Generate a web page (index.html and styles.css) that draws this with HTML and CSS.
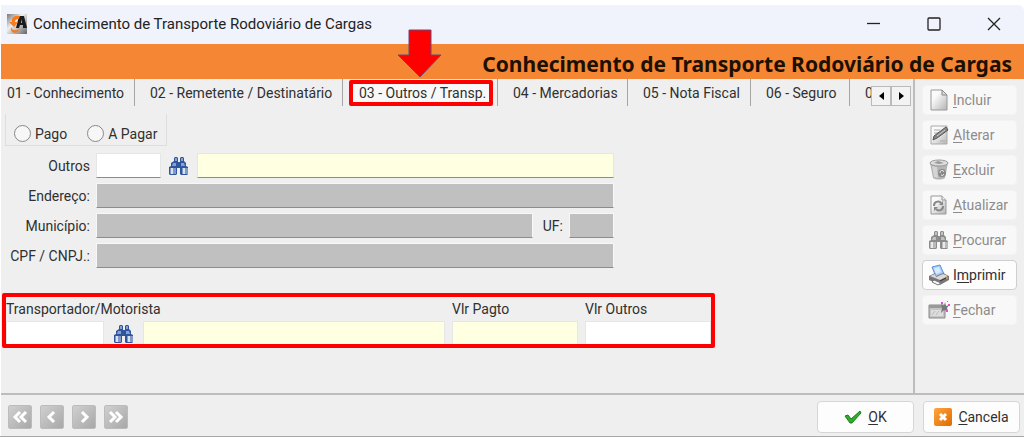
FILE: index.html
```html
<!DOCTYPE html>
<html lang="pt-BR">
  <head>
    <meta charset="utf-8" />
    <title>Conhecimento de Transporte Rodoviário de Cargas</title>
    <link rel="stylesheet" href="styles.css">
  </head>

  <body>
    <!-- Shared icons -->
    <svg class="defs" width="0" height="0">
      <defs>
        <linearGradient id="page" x1="0" y1="0" x2="1" y2="1">
          <stop offset="0.3" stop-color="#fafafa" />
          <stop offset="1" stop-color="#b4b4b4" />
        </linearGradient>
        <linearGradient id="orange" x1="0" y1="0" x2="1" y2="1">
          <stop offset="0" stop-color="#ffa640" />
          <stop offset="1" stop-color="#e06a00" />
        </linearGradient>
        <linearGradient id="metal" x1="0" y1="0" x2="1" y2="1">
          <stop offset="0" stop-color="#777" />
          <stop offset="0.4" stop-color="#eee" />
          <stop offset="1" stop-color="#666" />
        </linearGradient>
        <symbol id="binoculars" viewBox="0 0 20 18">
          <path d="M5 1l1-1h2l1 1v4h2V1l1-1h2l1 1v3l2 2v3l2 1v7l-1 1h-6l-1-1v-6H8v6l-1 1H1l-1-1v-7l2-1V6l3-2z" fill="currentColor" />
          <path d="M6 1h2v3H6zM12 1h2v3h-2zM4 6h3v3H3zM12 6h3l1 3h-4z" fill="#fff" opacity="0.45" />
          <path d="M1 11h6v6H1zM13 11h6v6h-6z" fill="#fff" opacity="0.4" />
          <path d="M2 11h2v6H2zM14 11h2v6h-2z" fill="#fff" opacity="0.7" />
        </symbol>
      </defs>
    </svg>

    <div class="window">
      <header class="titlebar">
        <svg class="app-icon" width="20" height="20" viewBox="0 0 20 20">
          <rect width="20" height="20" fill="url(#metal)" />
          <path d="M9 14l3-12h5l3 12h-4v-3h-3l-1 3zM14 9h1l-1-4z" fill="#1c1c1c" fill-rule="evenodd" />
          <path d="M13 2C7 1 4 4 5 8L2 8l5 5 4-5H8c0-2 1-3 4-3z" fill="#f57c1f" />
          <path d="M4 13c1 4 5 4 8 2l-1 3c-4 2-8 0-7-5z" fill="#f57c1f" />
        </svg>
        <span class="caption">Conhecimento de Transporte Rodoviário de Cargas</span>
        <div class="window-buttons">
          <button aria-label="Minimizar"><svg width="14" height="14"><path d="M0 6.5h13" /></svg></button>
          <button aria-label="Maximizar"><svg width="14" height="14"><rect x="1" y="1" width="12" height="12" rx="1" /></svg></button>
          <button aria-label="Sair"><svg width="14" height="14"><path d="M1 1l12 12M13 1L1 13" /></svg></button>
        </div>
      </header>

      <h1 class="banner">Conhecimento de Transporte Rodoviário de Cargas</h1>

      <div class="main">
        <main class="content">
          <!-- Tabs -->
          <div class="tab-bar">
            <nav class="tabs">
              <button class="tab">01 - Conhecimento</button>
              <button class="tab">02 - Remetente / Destinatário</button>
              <div class="tab-marked">
                <button class="tab active">03 - Outros / Transp.</button>
                <svg class="arrow" width="46" height="50" viewBox="0 0 46 50">
                  <path d="M12 1h22v25h10L23 48 1 26h11z" fill="#fe0000" stroke="#6b4a78" />
                </svg>
              </div>
              <button class="tab">04 - Mercadorias</button>
              <button class="tab">05 - Nota Fiscal</button>
              <button class="tab">06 - Seguro</button>
              <button class="tab cut">0</button>
            </nav>
            <div class="tab-scroll">
              <button aria-label="Anterior"><svg width="5" height="8"><path d="M5 0v8L0 4z" /></svg></button>
              <button aria-label="Próxima"><svg width="5" height="8"><path d="M0 0v8l5-4z" /></svg></button>
            </div>
          </div>

          <div class="payment">
            <label><input type="radio" name="payment" />Pago</label>
            <label><input type="radio" name="payment" />A Pagar</label>
          </div>

          <!-- Outros -->
          <div class="fields">
            <div class="row">
              <label for="outros">Outros</label>
              <input class="code" type="text" id="outros" />
              <button class="search" aria-label="Procurar outros"><svg width="20" height="18"><use href="#binoculars" /></svg></button>
              <input class="name lookup" type="text" aria-label="Nome" readonly />
            </div>
            <div class="row">
              <label for="endereco">Endereço:</label>
              <input class="name locked" type="text" id="endereco" readonly />
            </div>
            <div class="row">
              <label for="municipio">Município:</label>
              <input class="name locked" type="text" id="municipio" readonly />
              <label class="uf-label" for="uf">UF:</label>
              <input class="uf locked" type="text" id="uf" readonly />
            </div>
            <div class="row">
              <label for="cpf">CPF / CNPJ.:</label>
              <input class="name locked" type="text" id="cpf" readonly />
            </div>
          </div>

          <!-- Transportador -->
          <div class="carrier">
            <label class="carrier-label" for="transportador">Transportador/Motorista</label>
            <label class="value" for="pagto">Vlr Pagto</label>
            <label class="value" for="vlroutros">Vlr Outros</label>
            <input type="text" id="transportador" />
            <button class="search" aria-label="Procurar motorista"><svg width="20" height="18"><use href="#binoculars" /></svg></button>
            <input class="lookup" type="text" aria-label="Nome do motorista" readonly />
            <input class="lookup value" type="text" id="pagto" readonly />
            <input class="value" type="text" id="vlroutros" />
          </div>
        </main>

        <!-- Actions -->
        <aside class="actions">
          <button disabled>
            <svg width="20" height="22" viewBox="0 0 20 22"><path d="M2 1h11l5 5v15H2z" fill="url(#page)" stroke="#999" /><path d="M13 1v5h5z" fill="#ddd" stroke="#888" /></svg>
            <span><u>I</u>ncluir</span>
          </button>
          <button disabled>
            <svg width="20" height="22" viewBox="0 0 20 22"><path d="M2 2h16v18H2z" fill="url(#page)" stroke="#aaa" /><path d="M5 6h6M5 9h5M5 12h4M11 17h5" stroke="#aaa" /><path d="M4 16l1-4L17 3l2 3-11 8z" fill="#888" stroke="#555" /><path d="M8 12l8-6" stroke="#ccc" /></svg>
            <span><u>A</u>lterar</span>
          </button>
          <button disabled>
            <svg width="20" height="22" viewBox="0 0 20 22"><path d="M1 4l3 15c3 2 9 2 12 0l3-15z" fill="#b4b4b4" /><path d="M3 7l2 11 4 1-1-11z" fill="#d4d4d4" /><ellipse cx="10" cy="4" rx="9" ry="3" fill="#ddd" stroke="#999" /><path d="M5 4l4-2 6 2-5 1z" fill="#999" /><circle cx="13" cy="14" r="4" fill="#888" /><path d="M11 14a2 2 0 0 1 4-1M15 15a2 2 0 0 1-3 1" stroke="#eee" fill="none" /></svg>
            <span><u>E</u>xcluir</span>
          </button>
          <button disabled>
            <svg width="20" height="22" viewBox="0 0 20 22"><path d="M2 2h11l4 4v14H2z" fill="url(#page)" stroke="#999" /><path d="M13 2v4h4" fill="#eee" stroke="#999" /><path d="M5 12a4 4 0 0 1 7-3M14 12a4 4 0 0 1-7 3" fill="none" stroke="#888" stroke-width="2" /><path d="M14 7v4h-4zM5 17v-4h4z" fill="#888" /></svg>
            <span><u>A</u>tualizar</span>
          </button>
          <button disabled>
            <svg width="20" height="18"><use href="#binoculars" /></svg>
            <span><u>P</u>rocurar</span>
          </button>
          <button>
            <svg width="22" height="22" viewBox="0 0 22 22"><path d="M4 3l8-2 4 9-8 3z" fill="#a9cdfa" stroke="#5f8fd8" /><path d="M6 4l5-1 2 5-5 2z" fill="#d8eaff" /><path d="M1 12l6-3 1 3 7-3 6 3v4l-9 5-11-5z" fill="#777" /><path d="M2 12l5-2 1 3 7-3 5 2-8 4z" fill="#d9d9d9" /><path d="M6 16l7 3-3 2-6-3z" fill="#f8f8f8" stroke="#777" /><path d="M12 17l8-4" stroke="#333" /><circle cx="19" cy="14" r="1" fill="#e9a137" /></svg>
            <span>I<u>m</u>primir</span>
          </button>
          <button disabled>
            <svg width="22" height="20" viewBox="0 0 22 20"><path d="M1 5h16v13H1z" fill="#c4c4c4" stroke="#888" /><path d="M1 5h16v3H1z" fill="#999" /><path d="M3 10h12v6H3z" fill="#ddd" /><path d="M4 15l3-4M8 15l3-4" stroke="#bbb" /><path d="M13 4l3 2 1-4 1 4 3-1-2 3 1 3-4-1-3 3 1-5z" fill="#777" /><path d="M13 2h2v2h-2zM20 4h2v2h-2zM18 10h2v2h-2zM19 1h1v1h-1z" fill="#e04be0" /></svg>
            <span><u>F</u>echar</span>
          </button>
        </aside>
      </div>

      <footer class="footer">
        <div class="pager">
          <button aria-label="Primeiro"><svg width="16" height="16"><path d="M8 3L3 8l5 5M14 3L9 8l5 5" /></svg></button>
          <button aria-label="Registro anterior"><svg width="16" height="16"><path d="M10 3L5 8l5 5" /></svg></button>
          <button aria-label="Próximo registro"><svg width="16" height="16"><path d="M6 3l5 5-5 5" /></svg></button>
          <button aria-label="Último"><svg width="16" height="16"><path d="M2 3l5 5-5 5M8 3l5 5-5 5" /></svg></button>
        </div>
        <button class="confirm">
          <svg width="18" height="14" viewBox="0 0 18 14"><path d="M1 6l3-1 3 4 9-8 1 2-9 10H6z" fill="#2fae2b" stroke="#1b7d1b" /></svg>
          <span><u>O</u>K</span>
        </button>
        <button class="confirm">
          <svg width="18" height="18" viewBox="0 0 18 18"><rect width="18" height="18" rx="2" fill="url(#orange)" /><path d="M6 6l6 6M12 6l-6 6" stroke="#fff" stroke-width="3" /></svg>
          <span><u>C</u>ancela</span>
        </button>
      </footer>
    </div>
  </body>
</html>
```
FILE: styles.css
```css
* {
  box-sizing: border-box;
}
body {
  margin: 0;
  background-color: #ffffff;
  font-family: Roboto, "Liberation Sans", sans-serif;
  font-size: 14px;
  line-height: 18px;
  color: #303030;
}
button,
input {
  font: inherit;
  color: inherit;
  margin: 0;
}
button {
  border: none;
  background: none;
  padding: 0;
}
.defs {
  position: absolute;
}
.window {
  display: flex;
  flex-direction: column;
  min-height: 100vh;
  padding: 5px 0 0 1px;
  border-bottom: 1px solid #a8a8a8;
}

/* title bar */
.titlebar {
  display: flex;
  align-items: center;
  height: 39px;
  padding: 0 23px 2px 6px;
  background-color: #f0f3fb;
  border-radius: 0 6px 0 0;
}
.caption {
  flex: 1;
  margin-left: 6px;
  font-size: 15px;
  color: #222222;
}
.window-buttons {
  display: flex;
  gap: 46px;
}
.window-buttons button {
  display: flex;
}
.window-buttons svg {
  fill: none;
  stroke: #222222;
  stroke-width: 1.3;
}
.banner {
  margin: 0;
  height: 35px;
  padding: 4px 12px 0 0;
  background-color: #f58634;
  color: #1c1000;
  font-family: "Noto Sans", "Open Sans", sans-serif;
  font-size: 21px;
  font-weight: bold;
  line-height: 32px;
  text-align: right;
}
.main {
  flex: 1;
  display: flex;
  background-color: #efefef;
  border-bottom: 2px solid #bdbdbd;
}
.content {
  flex: 1;
  min-width: 0;
}

/* tabs */
.tab-bar {
  display: flex;
  justify-content: space-between;
  padding-right: 2px;
}
.tabs {
  display: grid;
  grid-template-columns: 134px 208px 155px 130px 123px 99px 21px;
}
.tab {
  height: 27px;
  padding: 0 12px 0 15px;
  border-right: 1px solid #a5a5a5;
  text-align: left;
  white-space: nowrap;
}
.tab:first-child {
  padding-left: 6px;
}
.tab.cut {
  border: none;
  padding-right: 0;
  overflow: hidden;
}
.tab-marked {
  position: relative;
  padding: 1px 4px 0 6px;
  border-right: 1px solid #a5a5a5;
}
.tab.active {
  width: 100%;
  height: 26px;
  padding: 0 0 0 6px;
  border: 4px solid #fe0000;
  border-radius: 2px;
  background-color: #f8f8f8;
}
.arrow {
  position: absolute;
  left: 54px;
  top: -50px;
}
.tab-scroll {
  display: flex;
  padding-top: 7px;
}
.tab-scroll button {
  display: grid;
  place-items: center;
  width: 20px;
  height: 20px;
  border: 1px solid #bababa;
  background-color: #f3f3f3;
}

/* form */
.payment {
  display: flex;
  align-items: center;
  gap: 20px;
  width: 162px;
  height: 32px;
  margin: 8px 0 7px 4px;
  padding: 8px 0 0 8px;
  border: 1px solid #dedede;
  border-top: none;
}
.payment label {
  display: flex;
  align-items: center;
  gap: 4px;
}
.payment input {
  appearance: none;
  width: 17px;
  height: 17px;
  border: 1px solid #888888;
  border-radius: 50%;
  background-color: #f7f7f7;
}
.fields {
  display: flex;
  flex-direction: column;
  gap: 5px;
  max-width: 613px;
}
.row {
  display: flex;
  align-items: center;
}
.row label {
  width: 89px;
  margin-right: 6px;
  text-align: right;
}
.row .uf-label {
  width: auto;
  margin: 0 6px 0 10px;
}
input[type="text"] {
  min-width: 0;
  height: 25px;
  padding: 0 4px;
  border: 1px solid #e6e6e6;
  border-bottom-color: #8c8c8c;
  background-color: #ffffff;
  outline: none;
}
input.lookup {
  background-color: #ffffe1;
}
input.locked {
  border-color: #f7f7f7;
  border-bottom-color: #8c8c8c;
  background-color: #c0c0c0;
}
.row .name {
  flex: 1;
}
.row .code {
  width: 65px;
}
.row .uf {
  width: 45px;
}
.search {
  display: flex;
  justify-content: center;
  width: 36px;
  color: #2f559e;
}
.carrier {
  display: grid;
  grid-template-columns: 98px 39px 1fr 133px 133px;
  grid-template-rows: 24px 25px;
  align-items: center;
  max-width: 713px;
  height: 55px;
  margin: 25px 0 45px 1px;
  border: 4px solid #fe0000;
  border-radius: 2px;
  overflow: hidden;
}
.carrier-label {
  grid-column: span 3;
}
.carrier .value {
  margin-left: 7px;
}
.carrier .search {
  width: 100%;
}

/* actions */
.actions {
  display: flex;
  flex-direction: column;
  gap: 5px;
  width: 111px;
  padding: 6px 7px 0 7px;
  border-left: 2px solid #bdbdbd;
}
.actions button {
  display: grid;
  grid-template-columns: 22px auto;
  align-items: center;
  justify-content: start;
  justify-items: center;
  column-gap: 3px;
  height: 30px;
  padding-left: 5px;
  border: 1px solid #cfcfcf;
  border-radius: 4px;
  background-color: #fdfdfd;
}
.actions button:disabled {
  border-color: #f3f3f3;
  background-color: #f8f8f8;
  color: #8c8c8c;
}
u {
  text-underline-offset: 2px;
}

/* footer */
.footer {
  display: flex;
  align-items: center;
  gap: 9px;
  height: 41px;
  padding: 2px 4px 0 7px;
  background-color: #efefef;
}
.pager {
  flex: 1;
  display: flex;
  gap: 8px;
}
.pager button {
  display: grid;
  place-items: center;
  width: 24px;
  height: 24px;
  border: 1px solid #bcbcbc;
  border-radius: 2px;
  background: linear-gradient(135deg, #d0d0d0, #a8a8a8);
}
.pager path {
  fill: none;
  stroke: #ffffff;
  stroke-width: 3;
}
.confirm {
  display: flex;
  align-items: center;
  justify-content: center;
  gap: 6px;
  width: 97px;
  height: 32px;
  border: 1px solid #d6d6d6;
  border-radius: 4px;
  background-color: #fdfdfd;
}
```
